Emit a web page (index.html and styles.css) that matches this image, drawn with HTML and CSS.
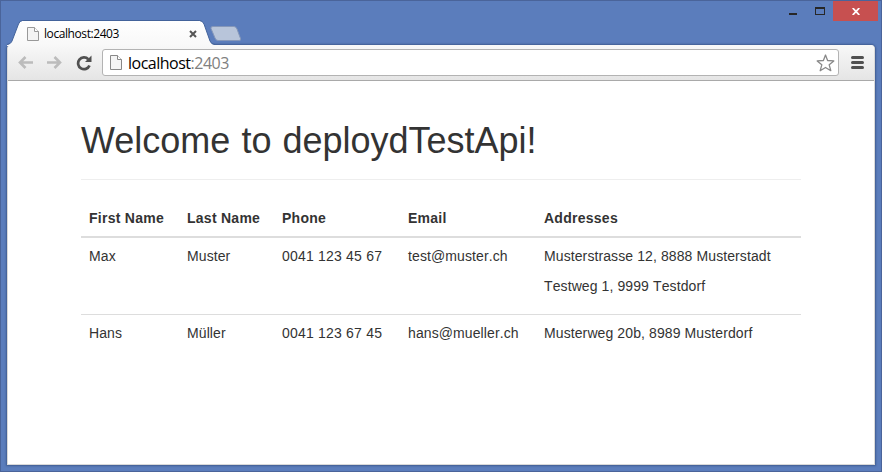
FILE: index.html
```html
<!DOCTYPE html>
<html lang="en">
<head>
<meta charset="utf-8">
<title>localhost:2403</title>
<link rel="stylesheet" href="styles.css">
</head>
<body>
<div class="window">
  <header class="titlebar">
    <div class="tab">
      <svg class="tab-shape" width="210" height="26" viewBox="0 0 210 26">
        <defs><linearGradient id="tabfill" x1="0" y1="0" x2="0" y2="1"><stop offset="0" stop-color="#fff"/><stop offset="1" stop-color="#f8f8f8"/></linearGradient></defs>
        <path d="M0 26V25C3 24 4 23 5 21L11.500 4Q12.700 1 15.500 1H192.500Q195.500 1 197 4L203 21Q204.300 24.500 208 25V26Z" fill="url(#tabfill)"/>
        <path d="M0 24.500C3 24 4 23 5 21L11.500 4Q12.700 .5 15.500 .5H192.500Q195.500 .5 197 4L203 21Q204.300 24.500 208 24.500" fill="none" stroke="#43639b"/>
      </svg>
      <svg class="tab-page" width="12" height="14" viewBox="0 0 12 14"><path d="M.5.5H7.500L11.500 4.500V13.500H.5Z" fill="#f4f4f4" stroke="#999"/><path d="M7.500.5V4.500H11.500" fill="#fff" stroke="#999"/></svg>
      <span class="tab-title">localhost:2403</span>
      <svg class="tab-close" width="8" height="8" viewBox="0 0 8 8"><path d="M1 1L7 7M7 1L1 7" stroke="#555" stroke-width="2"/></svg>
    </div>
    <svg class="new-tab" width="32" height="16" viewBox="0 0 32 16"><path d="M3 .5H24Q26 .5 27 3L30.500 12.500Q31.300 14.500 29 14.500H8Q6 14.500 5 12L1 2.500Q.4.500 3 .5Z" fill="#b8c5da" stroke="#8597b9"/></svg>
    <div class="controls">
      <svg class="minimize" width="8" height="2"><rect width="8" height="2" fill="#272727"/></svg>
      <svg class="maximize" width="10" height="8" viewBox="0 0 10 8"><path d="M0 0H10V8H0ZM1 2V7H9V2Z" fill="#272727" fill-rule="evenodd"/></svg>
      <div class="close"><svg width="8" height="7" viewBox="0 0 8 7"><path d="M.7 0L7.300 7M7.300 0L.7 7" stroke="#fff" stroke-width="1.800"/></svg></div>
    </div>
  </header>
  <div class="frame">
    <nav class="toolbar">
      <svg class="arrow" width="15" height="13" viewBox="0 0 15 13"><path d="M7.500 1L2 6.500L7.500 12M2 6.500H15" fill="none" stroke="#bcbcbc" stroke-width="2.600"/></svg>
      <svg class="arrow forward" width="15" height="13" viewBox="0 0 15 13"><path d="M7.500 1L13 6.500L7.500 12M13 6.500H0" fill="none" stroke="#bcbcbc" stroke-width="2.600"/></svg>
      <svg class="reload" width="16" height="16" viewBox="0 0 16 16"><path d="M12.300 4.200A5.900 5.900 0 1 0 13.500 10.500" fill="none" stroke="#505050" stroke-width="2.700"/><path d="M15.500 .5V7H9Z" fill="#505050"/></svg>
      <div class="omnibox">
        <svg class="page" width="12" height="15" viewBox="0 0 12 15"><path d="M.5.5H7.500L11.500 4.500V14.500H.5Z" fill="#f4f4f4" stroke="#888"/><path d="M7.500.5V4.500H11.500" fill="#fff" stroke="#888"/></svg>
        <span class="url">localhost<span class="port">:2403</span></span>
        <svg class="star" width="19" height="18" viewBox="0 0 19 18"><path d="M9.500 1L11.600 6.500L17.800 6.900L13.200 10.800L14.800 16.700L9.500 13.500L4.200 16.700L5.800 10.800L1.200 6.900L7.400 6.500Z" fill="#fff" stroke="#888" stroke-width="1.300" stroke-linejoin="round"/></svg>
      </div>
      <svg class="menu" width="13" height="13" viewBox="0 0 13 13"><path d="M1.500 1.500H11.500M1.500 6.500H11.500M1.500 11.500H11.500" stroke="#505050" stroke-width="3" stroke-linecap="round"/></svg>
    </nav>
    <main class="content">
      <h1>Welcome to deploydTestApi!</h1>
      <table>
        <colgroup><col class="c1"><col class="c2"><col class="c3"><col class="c4"><col class="c5"></colgroup>
        <thead><tr><th>First Name</th><th>Last Name</th><th>Phone</th><th>Email</th><th>Addresses</th></tr></thead>
        <tbody>
          <tr><td>Max</td><td>Muster</td><td class="phone">0041 123 45 67</td><td>test@muster.ch</td><td><p>Musterstrasse 12, 8888 Musterstadt</p><p>Testweg 1, 9999 Testdorf</p></td></tr>
          <tr><td>Hans</td><td>Müller</td><td class="phone">0041 123 67 45</td><td>hans@mueller.ch</td><td><p>Musterweg 20b, 8989 Musterdorf</p></td></tr>
        </tbody>
      </table>
    </main>
  </div>
</div>
</body>
</html>
```
FILE: styles.css
```css
* { box-sizing: border-box; }
body { margin: 0; font-family: "Liberation Sans", Arial, sans-serif; }
svg { display: block; flex: none; }
.window {
  width: 882px;
  height: 472px;
  padding: 0 6px 6px;
  border: 1px solid #4a649a;
  background: #5b7dbc;
  overflow: hidden;
}
.titlebar { display: flex; height: 44px; margin-right: -4px; }
.tab {
  position: relative;
  z-index: 1;
  display: flex;
  align-items: center;
  width: 203px;
  height: 25px;
  margin-top: 19px;
  padding: 0 10px 0 20px;
}
.tab-shape { position: absolute; left: 0; top: 0; }
.tab-page, .tab-title, .tab-close { position: relative; top: 1px; }
.tab-title {
  margin-left: 5px;
  font: 12px/16px "Open Sans", sans-serif;
  letter-spacing: -0.42px;
  color: #000;
}
.tab-close { margin-left: auto; margin-right: 3px; }
.new-tab { margin: 25px 0 0 0; }
.controls { display: flex; margin-left: auto; }
.minimize { margin: 12px 18px 0 0; }
.maximize { margin: 6px 8px 0 0; }
.close {
  display: flex;
  align-items: center;
  justify-content: center;
  width: 45px;
  height: 20px;
  margin-right: 1px;
  background: #c75050;
}
.frame {
  height: 420px;
  border: 1px solid #d9d9d9;
  border-top: 0;
  border-radius: 4px 4px 0 0;
  background: #fff;
  box-shadow: 0 0 2px 1px #3f5c92;
}
.toolbar {
  display: flex;
  align-items: center;
  height: 36px;
  padding: 0 10px 0 10px;
  border-bottom: 1px solid #a9a9a9;
  border-radius: 4px 4px 0 0;
  background: linear-gradient(#f8f8f8, #e5e5e5);
}
.forward { margin-left: 14px; }
.reload { margin-left: 14px; }
.omnibox {
  display: flex;
  align-items: center;
  flex: 1;
  height: 27px;
  margin: 0 12px 0 10px;
  padding: 0 3px 0 7px;
  border: 1px solid #b3b3b3;
  border-radius: 3px;
  background: #fff;
}
.url {
  margin-left: 6px;
  font: 16px/22px "Open Sans", sans-serif;
  letter-spacing: -0.5px;
  color: #000;
}
.port { color: #808080; }
.star { margin-left: auto; }
.content { padding: 40px 73px 0; color: #333; font-kerning: none; }
h1 {
  height: 59px;
  margin: 0 0 20px;
  border-bottom: 1px solid #eee;
  font-size: 36px;
  font-weight: 400;
  font-kerning: normal;
  line-height: 39px;
  word-spacing: 1px;
}
table {
  width: 720px;
  table-layout: fixed;
  border-collapse: separate;
  border-spacing: 0;
  font-size: 14px;
  line-height: 20px;
  letter-spacing: 0.1px;
}
.c1 { width: 98px; }
.c2 { width: 95px; }
.c3 { width: 126px; }
.c4 { width: 136px; }
.c5 { width: 265px; }
th, td { padding: 8px; text-align: left; vertical-align: top; white-space: nowrap; }
th { border-bottom: 2px solid #ddd; letter-spacing: 0.26px; }
.phone { letter-spacing: 0.2px; }
tr + tr td { border-top: 1px solid #ddd; }
td p { margin: 0; }
p + p { margin: 10px 0; }
```
